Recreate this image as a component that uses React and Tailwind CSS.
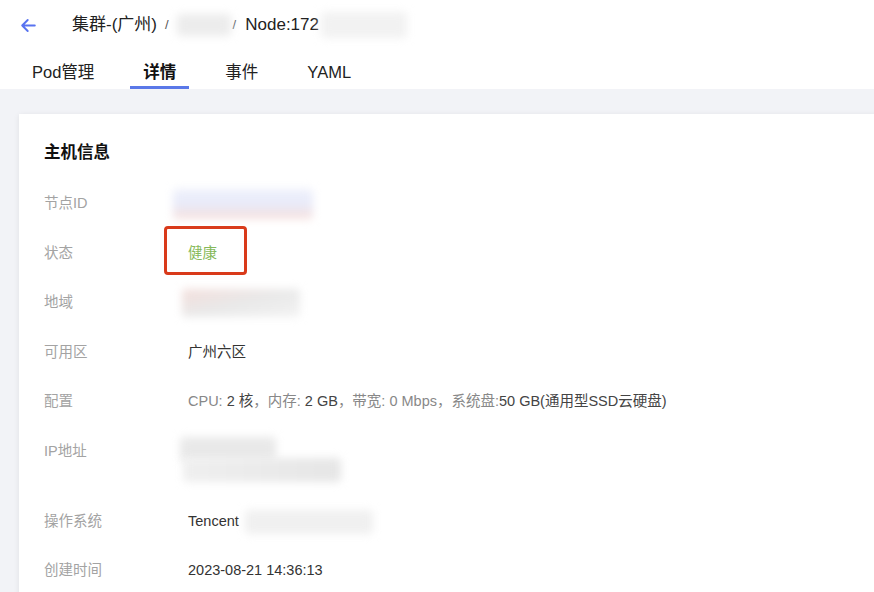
import React from 'react';

const FONT = { fontFamily: '"Liberation Sans", Arial, "Noto Sans CJK SC", sans-serif' };

// blurred placeholder used for masked values
function Mask({ className }) {
  return <div className={`blur-[4px] rounded-sm ${className}`} />;
}

const ROWS = [
  { label: '节点ID', value: <Mask className="w-[140px] h-[30px] ml-[-15px] bg-gradient-to-b from-[#eef0fb] via-[#e8ebfa] to-[#f7dfdb]" /> },
  {
    label: '状态',
    value: (
      <div className="relative">
        <span className="text-[#86b95a]">健康</span>
        <span className="absolute left-[-24px] top-[-17px] w-[83px] h-[49px] border-[3px] border-[#d93a1a] rounded-[4px]" />
      </div>
    ),
  },
  { label: '地域', value: <Mask className="w-[118px] h-[28px] ml-[-6px] bg-gradient-to-br from-[#f3dedb] via-[#e9e9e9] to-[#f3f3f3]" /> },
  { label: '可用区', value: <span className="text-[#333]">广州六区</span> },
  {
    label: '配置',
    value: (
      <span className="text-[#888]">
        CPU: <span className="text-[#444]">2 核</span>，内存: <span className="text-[#444]">2 GB</span>，带宽: 0 Mbps，系统盘:<span className="text-[#444]">50 GB(通用型SSD云硬盘)</span>
      </span>
    ),
  },
  {
    label: 'IP地址',
    tall: true,
    value: (
      <div className="flex flex-col mt-[10px] ml-[-8px]">
        <Mask className="w-[96px] h-[24px] bg-[#e9e9e9]" />
        <Mask className="w-[158px] h-[24px] mt-[-3px] ml-[3px] bg-gradient-to-r from-[#efefef] to-[#e6e6e6]" />
      </div>
    ),
  },
  {
    label: '操作系统',
    value: (
      <div className="flex items-center gap-[6px] text-[#333]">
        Tencent
        <Mask className="w-[128px] h-[24px] bg-[#f0f0f0]" />
      </div>
    ),
  },
  { label: '创建时间', value: <span className="text-[#333]">2023-08-21 14:36:13</span> },
];

const TABS = ['Pod管理', '详情', '事件', 'YAML'];

export default function App() {
  return (
    <div className="w-[874px] h-[592px] overflow-hidden bg-white flex flex-col" style={FONT}>
      {/* header / breadcrumb */}
      <div className="h-[50px] flex items-center pl-[19px] shrink-0">
        <svg className="w-[19px] h-[19px] text-[#5873f0]" viewBox="0 0 24 24" fill="none" stroke="currentColor" strokeWidth={2.4} strokeLinecap="round" strokeLinejoin="round">
          <path d="M20 12H4M11 5l-7 7 7 7" />
        </svg>
        <div className="ml-[34px] flex items-center text-[17px] text-[#222]">
          <span>集群-(广州)</span>
          <span className="mx-[8px] text-[13px] text-[#555]">/</span>
          <Mask className="w-[54px] h-[22px] bg-[#ececec]" />
          <span className="ml-[2px] mr-[9px] text-[13px] text-[#555]">/</span>
          <span>Node:172</span>
          <Mask className="w-[86px] h-[26px] ml-[2px] bg-[#f2f2f2]" />
        </div>
      </div>

      {/* tabs */}
      <div className="h-[39px] flex items-stretch pl-[19px] gap-[23px] shrink-0">
        {TABS.map((t) => (
          <div
            key={t}
            className={`px-[13px] pb-[1px] flex items-end text-[16.5px] border-b-[3px] ${
              t === '详情' ? 'font-bold text-[#111] border-[#5a78e8]' : 'text-[#222] border-transparent'
            }`}
          >
            {t}
          </div>
        ))}
      </div>

      {/* content */}
      <div className="flex-1 bg-[#f2f3f7] pl-[19px] pt-[25px] flex">
        <div className="flex-1 mr-[-20px] bg-white shadow-[0_1px_6px_rgba(0,0,0,0.08)] pl-[25px] pt-[26px]">
          <h2 className="text-[16.5px] leading-6 font-bold text-[#111]">主机信息</h2>
          <div className="mt-[15.5px] flex flex-col text-[14.5px]">
            {ROWS.map((r) => (
              <div key={r.label} className={`flex ${r.tall ? 'h-[70px] items-start' : 'h-[49.5px] items-center'}`}>
                <div className={`w-[144px] shrink-0 text-[#a3a3a3] ${r.tall ? 'h-[49.5px] flex items-center' : ''}`}>{r.label}</div>
                <div>{r.value}</div>
              </div>
            ))}
          </div>
        </div>
      </div>
    </div>
  );
}
